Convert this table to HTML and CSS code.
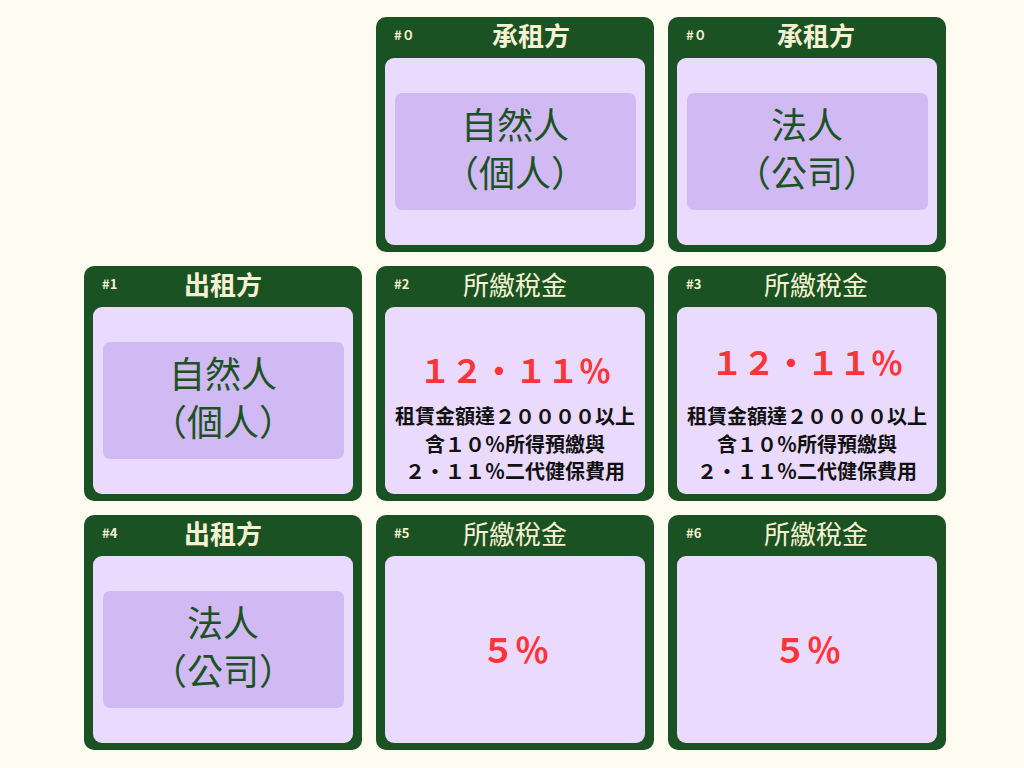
FILE: index.html
```html
<!DOCTYPE html>
<html lang="zh-Hant">
<head>
<meta charset="utf-8">
<title>租賃所得稅率</title>
<link rel="stylesheet" href="styles.css">
</head>
<body>
<main class="grid">
  <div class="blank"></div>

  <section class="card">
    <header class="card-head"><span class="tag">#０</span><h2 class="title bold shift-lg">承租方</h2></header>
    <div class="panel"><div class="box">自然人<br>（個人）</div></div>
  </section>

  <section class="card">
    <header class="card-head"><span class="tag">#０</span><h2 class="title bold shift-sm">承租方</h2></header>
    <div class="panel"><div class="box">法人<br>（公司）</div></div>
  </section>

  <section class="card">
    <header class="card-head"><span class="tag">#1</span><h2 class="title bold">出租方</h2></header>
    <div class="panel"><div class="box">自然人<br>（個人）</div></div>
  </section>

  <section class="card">
    <header class="card-head"><span class="tag">#2</span><h2 class="title">所繳稅金</h2></header>
    <div class="panel panel-top">
      <p class="rate">１２・１１％</p>
      <p class="note">租賃金額達２００００以上<br>含１０％所得預繳與<br>２・１１％二代健保費用</p>
    </div>
  </section>

  <section class="card">
    <header class="card-head"><span class="tag">#3</span><h2 class="title shift-sm">所繳稅金</h2></header>
    <div class="panel panel-top">
      <p class="rate rate-up">１２・１１％</p>
      <p class="note">租賃金額達２００００以上<br>含１０％所得預繳與<br>２・１１％二代健保費用</p>
    </div>
  </section>

  <section class="card">
    <header class="card-head"><span class="tag">#4</span><h2 class="title bold">出租方</h2></header>
    <div class="panel"><div class="box">法人<br>（公司）</div></div>
  </section>

  <section class="card">
    <header class="card-head"><span class="tag">#5</span><h2 class="title">所繳稅金</h2></header>
    <div class="panel"><p class="rate rate-big">５％</p></div>
  </section>

  <section class="card">
    <header class="card-head"><span class="tag">#6</span><h2 class="title shift-sm">所繳稅金</h2></header>
    <div class="panel"><p class="rate rate-big">５％</p></div>
  </section>
</main>
</body>
</html>
```
FILE: styles.css
```css
* { box-sizing: border-box; }

html, body {
  margin: 0;
  padding: 0;
  background: #fefbf0;
  font-family: "Noto Sans CJK TC", "Noto Sans", sans-serif;
}

.grid {
  display: grid;
  grid-template-columns: repeat(3, 278px);
  grid-template-rows: repeat(3, 235px);
  gap: 14px;
  padding: 17px 0 0 84px;
  width: 1024px;
  height: 768px;
}

.card {
  background: #1b5223;
  border-radius: 10px;
  display: flex;
  flex-direction: column;
  padding: 0 9px 7px;
}

.card-head {
  position: relative;
  height: 41px;
  padding-bottom: 5px;
  display: flex;
  align-items: center;
  justify-content: center;
  color: #f6f1d2;
}

.tag {
  position: absolute;
  left: 9px;
  top: 10px;
  font-size: 13px;
  font-weight: 700;
  line-height: 16px;
}

.title {
  margin: 0;
  font-size: 26px;
  font-weight: 400;
  line-height: 34px;
}

.title.bold { font-weight: 700; }
.shift-lg { margin-left: 32px; }
.shift-sm { margin-left: 18px; }

.panel {
  flex: 1;
  background: #e9dafe;
  border-radius: 9px;
  display: flex;
  flex-direction: column;
  align-items: center;
  justify-content: center;
}

.panel-top {
  justify-content: flex-start;
  padding-top: 38px;
}

.box {
  width: 241px;
  height: 117px;
  padding-bottom: 9px;
  background: #d1b9f3;
  border-radius: 7px;
  display: flex;
  align-items: center;
  justify-content: center;
  text-align: center;
  color: #1b5223;
  font-size: 36px;
  line-height: 48px;
}

.rate {
  margin: 0;
  color: #ff3338;
  font-size: 32px;
  font-weight: 700;
  line-height: 48px;
}

.rate-up {
  margin-top: -8px;
  margin-bottom: 8px;
}

.rate-big {
  font-size: 34px;
  padding-bottom: 2px;
}

.note {
  margin: 9px 0 0;
  color: #111;
  font-size: 20px;
  font-weight: 700;
  line-height: 27.5px;
  text-align: center;
}
```
